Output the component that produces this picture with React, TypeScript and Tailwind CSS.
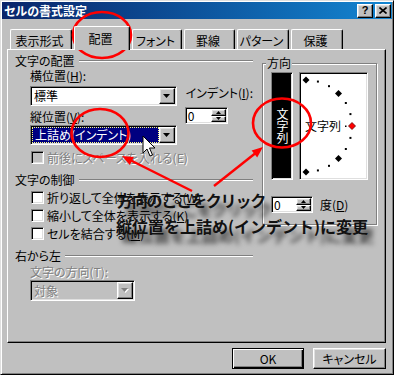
import React from "react";

const RAISED =
  "border border-t-white border-l-white border-r-black border-b-black shadow-[inset_-1px_-1px_0_#808080,inset_1px_1px_0_#dfdfdf]";
const SUNKEN =
  "border border-t-[#808080] border-l-[#808080] border-r-white border-b-white shadow-[inset_1px_1px_0_#000,inset_-1px_-1px_0_#dfdfdf]";
const DIS = "text-[#808080] [text-shadow:1px_1px_0_#fff]";

function U({ children }: { children: React.ReactNode }) {
  return <span className="underline decoration-1 underline-offset-[1px]">{children}</span>;
}

function DownTri({ disabled }: { disabled?: boolean }) {
  return (
    <svg width="8" height="5" viewBox="0 0 8 5">
      {disabled && <path d="M1 1H8L4.5 5Z" fill="#fff" />}
      <path d="M0 0H7L3.5 4Z" fill={disabled ? "#808080" : "#000"} />
    </svg>
  );
}

function Dropdown({
  text,
  className,
  highlighted,
  disabled,
}: {
  text: React.ReactNode;
  className: string;
  highlighted?: boolean;
  disabled?: boolean;
}) {
  return (
    <div className={`${SUNKEN} flex p-[1px] ${disabled ? "bg-[#c0c0c0]" : "bg-white"} ${className}`}>
      <div
        className={`flex-1 flex items-center pl-[2px] leading-[14px] whitespace-nowrap ${
          highlighted ? "bg-[#000080] text-white border border-dotted border-[#ffff80]" : ""
        } ${disabled ? DIS : ""}`}
      >
        {text}
      </div>
      <div className={`${RAISED} w-[16px] shrink-0 flex items-center justify-center bg-[#c0c0c0]`}>
        <DownTri disabled={disabled} />
      </div>
    </div>
  );
}

function Spinner({ className }: { className: string }) {
  return (
    <div className={`${SUNKEN} flex p-[1px] bg-white h-[17px] ${className}`}>
      <div className="flex-1 leading-[13px] pl-[1px]">0</div>
      <div className="flex flex-col w-[15px] shrink-0">
        <div className={`${RAISED} flex-1 flex items-center justify-center bg-[#c0c0c0]`}>
          <svg width="5" height="3" viewBox="0 0 5 3">
            <path d="M2.5 0L5 3H0Z" fill="#000" />
          </svg>
        </div>
        <div className={`${RAISED} flex-1 flex items-center justify-center bg-[#c0c0c0]`}>
          <svg width="5" height="3" viewBox="0 0 5 3">
            <path d="M0 0H5L2.5 3Z" fill="#000" />
          </svg>
        </div>
      </div>
    </div>
  );
}

function Header({ label, className }: { label: string; className: string }) {
  return (
    <div className={`flex items-center h-[14px] ${className}`}>
      <span className="leading-[14px] whitespace-nowrap">{label}</span>
      <div className="flex-1 ml-[4px] h-[2px] border-t border-t-[#808080] border-b border-b-white" />
    </div>
  );
}

function Check({
  label,
  disabled,
  className,
}: {
  label: React.ReactNode;
  disabled?: boolean;
  className: string;
}) {
  return (
    <div className={`flex items-center h-[13px] pl-[16px] ${className}`}>
      <div className={`${SUNKEN} w-[13px] h-[13px] shrink-0 ${disabled ? "bg-[#c0c0c0]" : "bg-white"}`} />
      <span className={`ml-[3px] leading-[14px] whitespace-nowrap ${disabled ? DIS : ""}`}>{label}</span>
    </div>
  );
}

function Tab({ label, w, selected }: { label: string; w: string; selected?: boolean }) {
  if (selected) {
    return (
      <div
        className={`${w} h-[24px] -mb-px relative z-10 bg-[#c0c0c0] border-t border-l border-r border-t-white border-l-white border-r-black rounded-t-[2px] shadow-[inset_-1px_0_0_#808080] flex items-center justify-center pr-[3px] leading-[14px]`}
      >
        {label}
      </div>
    );
  }
  return (
    <div
      className={`${w} h-[20px] bg-[#c0c0c0] border-t border-l border-r border-t-white border-l-white border-r-black rounded-t-[2px] shadow-[inset_-1px_0_0_#808080] flex items-center justify-center pr-[3px] pt-[2px] leading-[14px]`}
    >
      {label}
    </div>
  );
}

function Dial() {
  const angles = [90, 75, 60, 45, 30, 15, 0, -15, -30, -45, -60, -75, -90];
  return (
    <div className={`${SUNKEN} relative w-[69px] h-[108px] bg-white ml-[6px]`}>
      <svg className="absolute left-0 top-0" width="67" height="106" viewBox="0 0 67 106">
        {angles.map((a) => {
          const r = (a * Math.PI) / 180;
          const x = 6 + 46 * Math.cos(r);
          const y = 53 - 46 * Math.sin(r);
          if (a === 0) {
            return (
              <path
                key={a}
                d={`M${x} ${y - 3.5}L${x + 3.5} ${y}L${x} ${y + 3.5}L${x - 3.5} ${y}Z`}
                fill="#ff0000"
                stroke="#600"
                strokeWidth="0.8"
              />
            );
          }
          if (a % 45 === 0) {
            return (
              <path
                key={a}
                d={`M${x} ${y - 3.5}L${x + 3.5} ${y}L${x} ${y + 3.5}L${x - 3.5} ${y}Z`}
                fill="#000"
              />
            );
          }
          return <rect key={a} x={x - 1} y={y - 1} width="2" height="2" fill="#000" />;
        })}
        <rect x="45" y="52.5" width="1.5" height="1.5" fill="#000" />
      </svg>
      <span className="absolute left-[5px] top-[46px] leading-[14px] whitespace-nowrap">文字列</span>
    </div>
  );
}

export default function App() {
  return (
    <div className="relative w-[394px] h-[375px] overflow-hidden text-[12px] text-black font-['Noto_Sans_CJK_JP','Noto_Sans',sans-serif] [font-feature-settings:'palt']">
      <div className="w-full h-full bg-[#c0c0c0] border border-t-[#dfdfdf] border-l-[#dfdfdf] border-r-black border-b-black shadow-[inset_1px_1px_0_#fff,inset_-1px_-1px_0_#808080] p-[1px] flex flex-col">
        {/* Title bar */}
        <div className="h-[17px] shrink-0 flex items-center bg-linear-to-r from-[#0a246a] to-[#1486d2] pl-[2px] pr-[1px]">
          <span className="text-white font-bold leading-[14px]">セルの書式設定</span>
          <div className="ml-auto flex gap-[2px]">
            <div className={`${RAISED} w-[16px] h-[14px] bg-[#c0c0c0] flex items-center justify-center`}>
              <span className="font-['Liberation_Sans',sans-serif] font-bold text-[11px] leading-none">?</span>
            </div>
            <div className={`${RAISED} w-[16px] h-[14px] bg-[#c0c0c0] flex items-center justify-center`}>
              <svg width="8" height="7" viewBox="0 0 8 7">
                <path d="M0.5 0.5L7.5 6.5M7.5 0.5L0.5 6.5" stroke="#000" strokeWidth="1.6" />
              </svg>
            </div>
          </div>
        </div>

        {/* Body */}
        <div className="flex flex-col pl-[5px] pr-[6px]">
          {/* Tabs */}
          <div className="mt-[7px] h-[23px] flex items-end gap-[2px] pl-[3px]">
            <Tab label="表示形式" w="w-[62px]" />
            <Tab label="配置" w="w-[56px]" selected />
            <Tab label="フォント" w="w-[50px]" />
            <Tab label="罫線" w="w-[51px]" />
            <Tab label="パターン" w="w-[52px]" />
            <Tab label="保護" w="w-[52px]" />
          </div>

          {/* Panel */}
          <div className="h-[294px] border border-t-white border-l-white border-r-black border-b-black shadow-[inset_-1px_-1px_0_#808080] pl-[7px] pt-[4px] flex">
            {/* Left column */}
            <div className="w-[238px] flex flex-col">
              <Header label="文字の配置" className="" />
              <div className="flex pl-[15px] mt-[1px]">
                <div className="flex flex-col w-[148px]">
                  <div className="h-[14px] leading-[14px] whitespace-nowrap">
                    横位置(<U>H</U>):
                  </div>
                  <Dropdown text="標準" className="mt-[3px] h-[20px]" />
                  <div className="mt-[4px] h-[14px] leading-[14px] whitespace-nowrap">
                    縦位置(<U>V</U>):
                  </div>
                  <Dropdown text="上詰め(インデント)" className="mt-[1px] h-[20px]" highlighted />
                </div>
                <div className="ml-[8px] pt-[17px] flex flex-col">
                  <div className="h-[14px] leading-[14px] whitespace-nowrap pl-[1px]">
                    インデント(<U>I</U>):
                  </div>
                  <Spinner className="mt-[7px] w-[43px]" />
                </div>
              </div>
              <Check label="前後にスペースを入れる(E)" disabled className="mt-[6px]" />
              <Header label="文字の制御" className="mt-[9px]" />
              <Check
                label={
                  <>
                    折り返して全体を表示する(<U>W</U>)
                  </>
                }
                className="mt-[4px]"
              />
              <Check
                label={
                  <>
                    縮小して全体を表示する(<U>K</U>)
                  </>
                }
                className="mt-[5px]"
              />
              <Check
                label={
                  <>
                    セルを結合する(<U>M</U>)
                  </>
                }
                className="mt-[5px]"
              />
              <Header label="右から左" className="mt-[9px]" />
              <div className={`mt-[2px] pl-[15px] h-[14px] leading-[14px] whitespace-nowrap ${DIS}`}>
                文字の方向(T):
              </div>
              <div className="pl-[15px] mt-[1px]">
                <Dropdown text="対象" className="w-[105px] h-[21px]" disabled />
              </div>
            </div>

            {/* Right column: 方向 */}
            <div className="relative mt-[9px] ml-[9px] w-[115px] h-[162px] border border-[#808080] shadow-[inset_1px_1px_0_#fff,1px_1px_0_#fff] pl-[8px] pt-[8px] flex flex-col">
              <span className="absolute left-[3px] -top-[8px] bg-[#c0c0c0] px-[1px] leading-[14px]">方向</span>
              <div className="flex">
                <div className={`${SUNKEN} w-[22px] h-[108px] bg-black flex items-center justify-center`}>
                  <span className="text-white leading-[12px] [writing-mode:vertical-rl]">文字列</span>
                </div>
                <Dial />
              </div>
              <div className="mt-[16px] flex items-center">
                <Spinner className="w-[42px]" />
                <span className="ml-[7px] leading-[14px] whitespace-nowrap">
                  度(<U>D</U>)
                </span>
              </div>
            </div>
          </div>

          {/* Buttons */}
          <div className="mt-[5px] flex justify-end gap-[9px]">
            <div className="w-[72px] h-[21px] bg-[#c0c0c0] border border-black shadow-[inset_1px_1px_0_#fff,inset_-1px_-1px_0_#000,inset_-2px_-2px_0_#808080] flex items-center justify-center leading-[14px]">
              OK
            </div>
            <div className={`${RAISED} w-[73px] h-[21px] bg-[#c0c0c0] flex items-center justify-center leading-[14px]`}>
              キャンセル
            </div>
          </div>
        </div>
      </div>

      {/* Annotations: red circles and arrows */}
      <svg className="absolute left-0 top-0 pointer-events-none" width="394" height="375" viewBox="0 0 394 375">
        <ellipse cx="102" cy="35" rx="29" ry="23" fill="none" stroke="#ff0000" strokeWidth="2.6" />
        <ellipse cx="100" cy="133" rx="28.5" ry="24" fill="none" stroke="#ff0000" strokeWidth="2.6" />
        <ellipse cx="282" cy="123" rx="29" ry="24.5" fill="none" stroke="#ff0000" strokeWidth="2.6" />
        <line x1="192" y1="191" x2="130" y2="160" stroke="#ff0000" strokeWidth="2.4" />
        <polygon points="122,156 133.8,156.9 129.8,164.9" fill="#ff0000" />
        <line x1="214" y1="186" x2="255" y2="153.5" stroke="#ff0000" strokeWidth="2.4" />
        <polygon points="263,147 257.2,157.4 251.6,150.4" fill="#ff0000" />
      </svg>

      {/* Mouse cursor */}
      <svg className="absolute left-[142px] top-[135px] pointer-events-none" width="14" height="23" viewBox="0 0 14 23">
        <path d="M1 1L1 18L5 14L8 21L10.5 20L7.5 13L13 13Z" fill="#fff" stroke="#000" strokeWidth="1" strokeLinejoin="round" />
      </svg>

      {/* Annotation text */}
      <div className="absolute left-[116px] top-[187px] pointer-events-none font-bold text-[16px] leading-[26px] text-[#111] whitespace-nowrap [font-feature-settings:normal] [text-shadow:6px_9px_5px_rgba(0,0,0,0.65)]">
        <div className="pl-[1px] tracking-[-1.2px]">方向のここをクリック</div>
        <div>縦位置を上詰め(インデント)に変更</div>
      </div>
    </div>
  );
}
